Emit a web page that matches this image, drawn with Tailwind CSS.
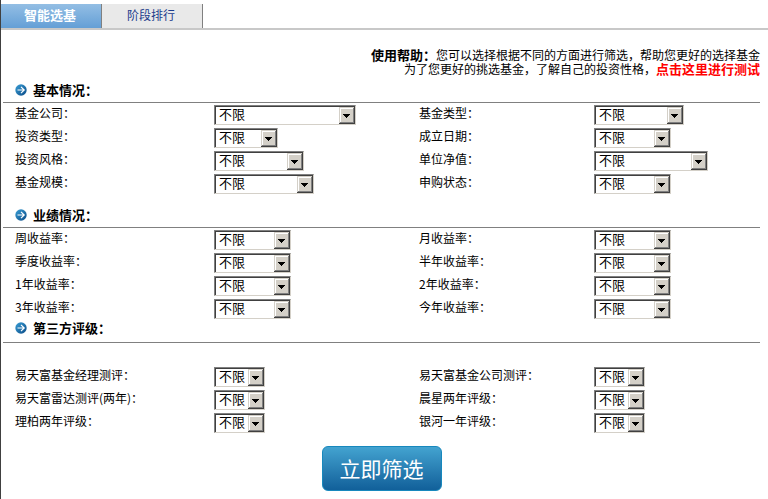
<!DOCTYPE html>
<html lang="zh-CN">
<head>
    <meta charset="UTF-8">
    <meta name="viewport" content="width=device-width, initial-scale=1.0">
    <title>智能选基</title>
    <script src="https://cdn.jsdelivr.net/npm/@tailwindcss/browser@4"></script>
</head>
<body class="bg-white text-black text-[12px] leading-[14px] font-['Noto_Sans_CJK_SC',sans-serif]">
    <!-- shared icons -->
    <svg class="absolute size-0">
        <linearGradient id="ball" x1="0" y1="0" x2="1" y2="1">
            <stop offset="0" stop-color="#3a9fd6"/>
            <stop offset="1" stop-color="#0a4a86"/>
        </linearGradient>
        <symbol id="bullet" viewBox="0 0 12 12">
            <circle cx="6" cy="6" r="5.7" fill="url(#ball)"/>
            <path d="M2.5 6H9M6 2.8L9.2 6L6 9.2" fill="none" stroke="#fff" stroke-width="1.2"/>
        </symbol>
        <symbol id="drop" viewBox="0 0 16 17">
            <path d="M0 0h16v17H0z" fill="#404040"/>
            <path d="M0 0h15v16H0z" fill="#d4d0c8"/>
            <path d="M1 1h14v15H1z" fill="#808080"/>
            <path d="M1 1h13v14H1z" fill="#fff"/>
            <path d="M2 2h12v13H2z" fill="#d4d0c8"/>
            <path d="M4 7h7v1H4zM5 8h5v1H5zM6 9h3v1H6zM7 10h1v1H7z" fill="#000"/>
        </symbol>
    </svg>

    <div class="min-h-screen border-l border-[#404040] pt-1">
        <nav class="flex h-[26px] border-b-2 border-[#c8c8c8]">
            <a href="#" class="w-[101px] border-r border-[#808080] bg-gradient-to-b from-[#93bee4] to-[#649fd6] pr-[2px] text-center text-[13px] font-bold leading-[22px] text-white">智能选基</a>
            <a href="#" class="w-[101px] border-r border-[#808080] bg-[#e9e9e9] pr-[2px] text-center leading-[22px] text-[#1c3c8c]">阶段排行</a>
        </nav>

        <form class="pl-[2px] pr-2">
            <div class="pt-[18px] text-right">
                <p><b class="text-[13px]">使用帮助：</b>您可以选择根据不同的方面进行筛选，帮助您更好的选择基金</p>
                <p>为了您更好的挑选基金，了解自己的投资性格，<a href="#" class="text-[13px] font-bold text-[#ff0000]">点击这里进行测试</a></p>
            </div>

            <h2 class="mt-1 flex h-[23px] items-center gap-[6px] border-b border-[#808080] pb-[2px] pl-3 text-[13px] font-bold">
                <svg class="size-3"><use href="#bullet"/></svg>基本情况：
            </h2>
            <div class="grid auto-rows-[23px] grid-cols-[199fr_205fr_175fr_166fr] items-start pl-3 pt-[2px]">
                <label for="company" class="leading-4">基金公司：</label>
                <span class="relative h-5 w-[142px]">
                    <select id="company" class="block h-5 w-full appearance-none border border-[#d4d0c8] border-l-[#808080] border-t-[#808080] bg-white pb-[2px] pl-1 text-[13px] leading-4 shadow-[inset_1px_1px_0_#404040]"><option>不限</option></select>
                    <svg class="pointer-events-none absolute right-px top-[2px] h-[17px] w-4"><use href="#drop"/></svg>
                </span>
                <label for="type" class="leading-4">基金类型：</label>
                <span class="relative h-5 w-[90px]">
                    <select id="type" class="block h-5 w-full appearance-none border border-[#d4d0c8] border-l-[#808080] border-t-[#808080] bg-white pb-[2px] pl-1 text-[13px] leading-4 shadow-[inset_1px_1px_0_#404040]"><option>不限</option></select>
                    <svg class="pointer-events-none absolute right-px top-[2px] h-[17px] w-4"><use href="#drop"/></svg>
                </span>

                <label for="invest" class="leading-4">投资类型：</label>
                <span class="relative h-5 w-16">
                    <select id="invest" class="block h-5 w-full appearance-none border border-[#d4d0c8] border-l-[#808080] border-t-[#808080] bg-white pb-[2px] pl-1 text-[13px] leading-4 shadow-[inset_1px_1px_0_#404040]"><option>不限</option></select>
                    <svg class="pointer-events-none absolute right-px top-[2px] h-[17px] w-4"><use href="#drop"/></svg>
                </span>
                <label for="founded" class="leading-4">成立日期：</label>
                <span class="relative h-5 w-[77px]">
                    <select id="founded" class="block h-5 w-full appearance-none border border-[#d4d0c8] border-l-[#808080] border-t-[#808080] bg-white pb-[2px] pl-1 text-[13px] leading-4 shadow-[inset_1px_1px_0_#404040]"><option>不限</option></select>
                    <svg class="pointer-events-none absolute right-px top-[2px] h-[17px] w-4"><use href="#drop"/></svg>
                </span>

                <label for="style" class="leading-4">投资风格：</label>
                <span class="relative h-5 w-[90px]">
                    <select id="style" class="block h-5 w-full appearance-none border border-[#d4d0c8] border-l-[#808080] border-t-[#808080] bg-white pb-[2px] pl-1 text-[13px] leading-4 shadow-[inset_1px_1px_0_#404040]"><option>不限</option></select>
                    <svg class="pointer-events-none absolute right-px top-[2px] h-[17px] w-4"><use href="#drop"/></svg>
                </span>
                <label for="nav" class="leading-4">单位净值：</label>
                <span class="relative h-5 w-[114px]">
                    <select id="nav" class="block h-5 w-full appearance-none border border-[#d4d0c8] border-l-[#808080] border-t-[#808080] bg-white pb-[2px] pl-1 text-[13px] leading-4 shadow-[inset_1px_1px_0_#404040]"><option>不限</option></select>
                    <svg class="pointer-events-none absolute right-px top-[2px] h-[17px] w-4"><use href="#drop"/></svg>
                </span>

                <label for="scale" class="leading-4">基金规模：</label>
                <span class="relative h-5 w-[100px]">
                    <select id="scale" class="block h-5 w-full appearance-none border border-[#d4d0c8] border-l-[#808080] border-t-[#808080] bg-white pb-[2px] pl-1 text-[13px] leading-4 shadow-[inset_1px_1px_0_#404040]"><option>不限</option></select>
                    <svg class="pointer-events-none absolute right-px top-[2px] h-[17px] w-4"><use href="#drop"/></svg>
                </span>
                <label for="status" class="leading-4">申购状态：</label>
                <span class="relative h-5 w-[77px]">
                    <select id="status" class="block h-5 w-full appearance-none border border-[#d4d0c8] border-l-[#808080] border-t-[#808080] bg-white pb-[2px] pl-1 text-[13px] leading-4 shadow-[inset_1px_1px_0_#404040]"><option>不限</option></select>
                    <svg class="pointer-events-none absolute right-px top-[2px] h-[17px] w-4"><use href="#drop"/></svg>
                </span>
            </div>

            <h2 class="mt-2 flex h-[23px] items-center gap-[6px] border-b border-[#808080] pb-[2px] pl-3 text-[13px] font-bold">
                <svg class="size-3"><use href="#bullet"/></svg>业绩情况：
            </h2>
            <div class="grid auto-rows-[23px] grid-cols-[199fr_205fr_175fr_166fr] items-start pl-3 pt-[2px]">
                <label for="week" class="leading-4">周收益率：</label>
                <span class="relative h-5 w-[77px]">
                    <select id="week" class="block h-5 w-full appearance-none border border-[#d4d0c8] border-l-[#808080] border-t-[#808080] bg-white pb-[2px] pl-1 text-[13px] leading-4 shadow-[inset_1px_1px_0_#404040]"><option>不限</option></select>
                    <svg class="pointer-events-none absolute right-px top-[2px] h-[17px] w-4"><use href="#drop"/></svg>
                </span>
                <label for="month" class="leading-4">月收益率：</label>
                <span class="relative h-5 w-[77px]">
                    <select id="month" class="block h-5 w-full appearance-none border border-[#d4d0c8] border-l-[#808080] border-t-[#808080] bg-white pb-[2px] pl-1 text-[13px] leading-4 shadow-[inset_1px_1px_0_#404040]"><option>不限</option></select>
                    <svg class="pointer-events-none absolute right-px top-[2px] h-[17px] w-4"><use href="#drop"/></svg>
                </span>

                <label for="quarter" class="leading-4">季度收益率：</label>
                <span class="relative h-5 w-[77px]">
                    <select id="quarter" class="block h-5 w-full appearance-none border border-[#d4d0c8] border-l-[#808080] border-t-[#808080] bg-white pb-[2px] pl-1 text-[13px] leading-4 shadow-[inset_1px_1px_0_#404040]"><option>不限</option></select>
                    <svg class="pointer-events-none absolute right-px top-[2px] h-[17px] w-4"><use href="#drop"/></svg>
                </span>
                <label for="half" class="leading-4">半年收益率：</label>
                <span class="relative h-5 w-[77px]">
                    <select id="half" class="block h-5 w-full appearance-none border border-[#d4d0c8] border-l-[#808080] border-t-[#808080] bg-white pb-[2px] pl-1 text-[13px] leading-4 shadow-[inset_1px_1px_0_#404040]"><option>不限</option></select>
                    <svg class="pointer-events-none absolute right-px top-[2px] h-[17px] w-4"><use href="#drop"/></svg>
                </span>

                <label for="year1" class="leading-4">1年收益率：</label>
                <span class="relative h-5 w-[77px]">
                    <select id="year1" class="block h-5 w-full appearance-none border border-[#d4d0c8] border-l-[#808080] border-t-[#808080] bg-white pb-[2px] pl-1 text-[13px] leading-4 shadow-[inset_1px_1px_0_#404040]"><option>不限</option></select>
                    <svg class="pointer-events-none absolute right-px top-[2px] h-[17px] w-4"><use href="#drop"/></svg>
                </span>
                <label for="year2" class="leading-4">2年收益率：</label>
                <span class="relative h-5 w-[77px]">
                    <select id="year2" class="block h-5 w-full appearance-none border border-[#d4d0c8] border-l-[#808080] border-t-[#808080] bg-white pb-[2px] pl-1 text-[13px] leading-4 shadow-[inset_1px_1px_0_#404040]"><option>不限</option></select>
                    <svg class="pointer-events-none absolute right-px top-[2px] h-[17px] w-4"><use href="#drop"/></svg>
                </span>

                <label for="year3" class="leading-4">3年收益率：</label>
                <span class="relative h-5 w-[77px]">
                    <select id="year3" class="block h-5 w-full appearance-none border border-[#d4d0c8] border-l-[#808080] border-t-[#808080] bg-white pb-[2px] pl-1 text-[13px] leading-4 shadow-[inset_1px_1px_0_#404040]"><option>不限</option></select>
                    <svg class="pointer-events-none absolute right-px top-[2px] h-[17px] w-4"><use href="#drop"/></svg>
                </span>
                <label for="ytd" class="leading-4">今年收益率：</label>
                <span class="relative h-5 w-[77px]">
                    <select id="ytd" class="block h-5 w-full appearance-none border border-[#d4d0c8] border-l-[#808080] border-t-[#808080] bg-white pb-[2px] pl-1 text-[13px] leading-4 shadow-[inset_1px_1px_0_#404040]"><option>不限</option></select>
                    <svg class="pointer-events-none absolute right-px top-[2px] h-[17px] w-4"><use href="#drop"/></svg>
                </span>
            </div>

            <h2 class="flex h-[21px] items-start gap-[6px] border-b border-[#808080] pl-3 text-[13px] font-bold leading-3">
                <svg class="size-3"><use href="#bullet"/></svg>第三方评级：
            </h2>
            <div class="mt-[22px] grid auto-rows-[23px] grid-cols-[199fr_205fr_175fr_166fr] items-start pl-3 pt-[2px]">
                <label for="manager" class="leading-4">易天富基金经理测评：</label>
                <span class="relative h-5 w-[51px]">
                    <select id="manager" class="block h-5 w-full appearance-none border border-[#d4d0c8] border-l-[#808080] border-t-[#808080] bg-white pb-[2px] pl-1 text-[13px] leading-4 shadow-[inset_1px_1px_0_#404040]"><option>不限</option></select>
                    <svg class="pointer-events-none absolute right-px top-[2px] h-[17px] w-4"><use href="#drop"/></svg>
                </span>
                <label for="firm" class="leading-4">易天富基金公司测评：</label>
                <span class="relative h-5 w-[51px]">
                    <select id="firm" class="block h-5 w-full appearance-none border border-[#d4d0c8] border-l-[#808080] border-t-[#808080] bg-white pb-[2px] pl-1 text-[13px] leading-4 shadow-[inset_1px_1px_0_#404040]"><option>不限</option></select>
                    <svg class="pointer-events-none absolute right-px top-[2px] h-[17px] w-4"><use href="#drop"/></svg>
                </span>

                <label for="radar" class="leading-4">易天富雷达测评(两年)：</label>
                <span class="relative h-5 w-[51px]">
                    <select id="radar" class="block h-5 w-full appearance-none border border-[#d4d0c8] border-l-[#808080] border-t-[#808080] bg-white pb-[2px] pl-1 text-[13px] leading-4 shadow-[inset_1px_1px_0_#404040]"><option>不限</option></select>
                    <svg class="pointer-events-none absolute right-px top-[2px] h-[17px] w-4"><use href="#drop"/></svg>
                </span>
                <label for="morningstar" class="leading-4">晨星两年评级：</label>
                <span class="relative h-5 w-[51px]">
                    <select id="morningstar" class="block h-5 w-full appearance-none border border-[#d4d0c8] border-l-[#808080] border-t-[#808080] bg-white pb-[2px] pl-1 text-[13px] leading-4 shadow-[inset_1px_1px_0_#404040]"><option>不限</option></select>
                    <svg class="pointer-events-none absolute right-px top-[2px] h-[17px] w-4"><use href="#drop"/></svg>
                </span>

                <label for="lipper" class="leading-4">理柏两年评级：</label>
                <span class="relative h-5 w-[51px]">
                    <select id="lipper" class="block h-5 w-full appearance-none border border-[#d4d0c8] border-l-[#808080] border-t-[#808080] bg-white pb-[2px] pl-1 text-[13px] leading-4 shadow-[inset_1px_1px_0_#404040]"><option>不限</option></select>
                    <svg class="pointer-events-none absolute right-px top-[2px] h-[17px] w-4"><use href="#drop"/></svg>
                </span>
                <label for="galaxy" class="leading-4">银河一年评级：</label>
                <span class="relative h-5 w-[51px]">
                    <select id="galaxy" class="block h-5 w-full appearance-none border border-[#d4d0c8] border-l-[#808080] border-t-[#808080] bg-white pb-[2px] pl-1 text-[13px] leading-4 shadow-[inset_1px_1px_0_#404040]"><option>不限</option></select>
                    <svg class="pointer-events-none absolute right-px top-[2px] h-[17px] w-4"><use href="#drop"/></svg>
                </span>
            </div>

            <button type="submit" class="mx-auto mt-[10px] block h-[45px] w-[120px] rounded-md border border-[#1788bd] bg-gradient-to-b from-[#43a3d0] to-[#11609a] text-[21px] leading-[43px] text-white">立即筛选</button>
        </form>
    </div>
</body>
</html>
